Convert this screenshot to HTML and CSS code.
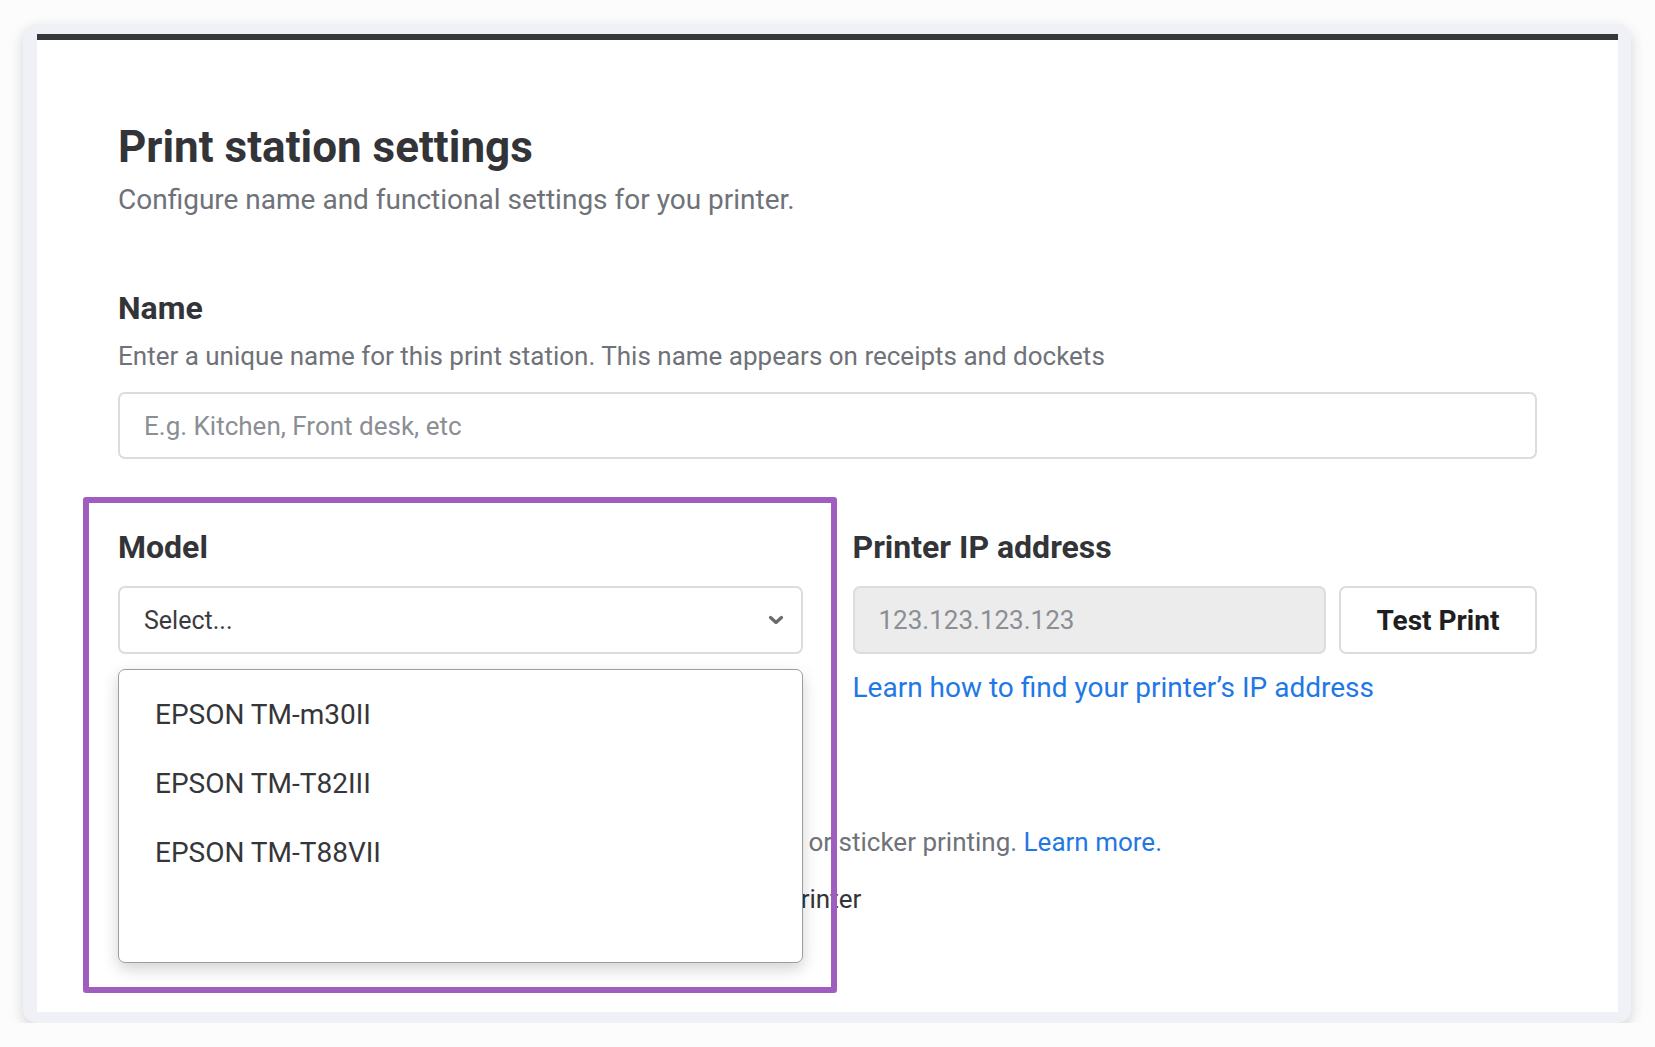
FILE: index.html
```html
<!DOCTYPE html>
<html lang="en">
  <head>
    <meta charset="UTF-8" />
    <title>Print station settings</title>
    <link rel="stylesheet" href="styles.css">
  </head>
  <body>
    <div class="frame">
      <div class="card">
        <h1 class="title">Print station settings</h1>
        <p class="subtitle">Configure name and functional settings for you printer.</p>

        <section class="field name-field">
          <h2 class="label">Name</h2>
          <p class="hint">Enter a unique name for this print station. This name appears on receipts and dockets</p>
          <input class="text-input" type="text" placeholder="E.g. Kitchen, Front desk, etc" />
        </section>

        <div class="row">
          <section class="field model-field">
            <h2 class="label">Model</h2>
            <div class="select">
              <span>Select...</span>
              <svg class="chevron" width="16" height="10" viewBox="0 0 16 10">
                <path d="M2.5 2.5l5.5 5 5.5-5" fill="none" stroke="#6a6a6a" stroke-width="3.2" stroke-linecap="round" stroke-linejoin="round" />
              </svg>
            </div>
            <ul class="dropdown">
              <li>EPSON TM-m30II</li>
              <li>EPSON TM-T82III</li>
              <li>EPSON TM-T88VII</li>
            </ul>
            <div class="highlight"></div>
          </section>

          <section class="field">
            <h2 class="label">Printer IP address</h2>
            <div class="ip-row">
              <input class="text-input ip-input" type="text" placeholder="123.123.123.123" />
              <button class="test-btn">Test Print</button>
            </div>
            <a class="link" href="#">Learn how to find your printer’s IP address</a>
          </section>
        </div>

        <section class="field sticker-field">
          <h2 class="label">Sticker printing</h2>
          <p class="hint">Switch this on if this print station is a printer used for labels or sticker printing. <a class="link-inline" href="#">Learn more.</a></p>
          <label class="check"><span class="box"></span>Mark this print station as a dedicated sticker and label printer</label>
        </section>
      </div>
    </div>
  </body>
</html>
```

FILE: styles.css
```css
body {
  margin: 0;
  background-color: #fcfcfc;
  font-family: Roboto, "Liberation Sans", Arial, sans-serif;
  color: #333438;
  overflow: hidden;
}
.frame {
  margin: 24px 24px 0 23px;
  padding: 10px 13px 11px 14px;
  background-color: #f0f1f6;
  border-radius: 14px;
  box-shadow: 0 5px 14px rgba(0, 0, 0, 0.16);
}
.card {
  height: 978px;
  box-sizing: border-box;
  background-color: #fff;
  border-top: 6px solid #36373b;
  padding: 81px 81px 0 81px;
}
.title {
  margin: 0;
  font-size: 44px;
  line-height: 52px;
  font-weight: 700;
  color: #333438;
}
.subtitle {
  margin: 9px 0 0;
  font-size: 28px;
  line-height: 36px;
  color: #6f7278;
}
.field {
  display: flex;
  flex-direction: column;
}
.name-field {
  margin-top: 72px;
}
.label {
  margin: 0;
  font-size: 32px;
  line-height: 36px;
  font-weight: 700;
  color: #333438;
}
.hint {
  margin: 12px 0 0;
  font-size: 26px;
  line-height: 36px;
  color: #6f7278;
}
.text-input {
  margin-top: 18px;
  height: 67px;
  box-sizing: border-box;
  border: 2px solid #dcdcde;
  border-radius: 7px;
  padding: 0 24px;
  font-family: inherit;
  font-size: 26px;
  color: #333;
  background-color: #fff;
}
.text-input::placeholder {
  color: #8b8e94;
}
.row {
  margin-top: 70px;
  display: grid;
  grid-template-columns: 1fr 1fr;
  gap: 50px;
}
.model-field {
  position: relative;
}
.select {
  margin-top: 21px;
  height: 68px;
  box-sizing: border-box;
  border: 2px solid #dcdcde;
  border-radius: 7px;
  padding: 0 17px 0 24px;
  display: flex;
  align-items: center;
  justify-content: space-between;
  font-size: 25px;
  color: #3a3b3e;
}
.dropdown {
  position: absolute;
  top: 140px;
  left: 0;
  right: 0;
  height: 294px;
  box-sizing: border-box;
  margin: 0;
  padding: 10px 0 0;
  list-style: none;
  background-color: #fff;
  border: 1px solid #9d9d9f;
  border-radius: 7px;
  box-shadow: 0 6px 16px rgba(0, 0, 0, 0.18);
  z-index: 2;
}
.dropdown li {
  height: 69px;
  line-height: 69px;
  padding-left: 36px;
  font-size: 28px;
  color: #35363a;
}
.highlight {
  position: absolute;
  top: -32px;
  left: -35px;
  right: -34px;
  height: 496px;
  box-sizing: border-box;
  border: 6px solid #a05dc0;
  border-radius: 3px;
  z-index: 3;
}
.ip-row {
  margin-top: 21px;
  display: flex;
  gap: 13px;
}
.ip-row .text-input {
  margin-top: 0;
  height: 68px;
}
.ip-input {
  flex: 1;
  background-color: #ececec;
}
.test-btn {
  width: 198px;
  height: 68px;
  border: 2px solid #dcdcde;
  border-radius: 7px;
  background-color: #fff;
  font-family: inherit;
  font-size: 28px;
  font-weight: 700;
  color: #1f1f21;
}
.link {
  margin-top: 16px;
  font-size: 28px;
  line-height: 36px;
  color: #1f78e6;
  text-decoration: none;
}
.link-inline {
  color: #1f78e6;
  text-decoration: none;
}
.sticker-field {
  margin-top: 70px;
}
.check {
  margin-top: 21px;
  display: flex;
  align-items: center;
  gap: 10px;
  font-size: 26px;
  line-height: 36px;
  color: #333438;
}
.box {
  width: 24px;
  height: 24px;
  border: 2px solid #bbb;
  border-radius: 4px;
}
```
